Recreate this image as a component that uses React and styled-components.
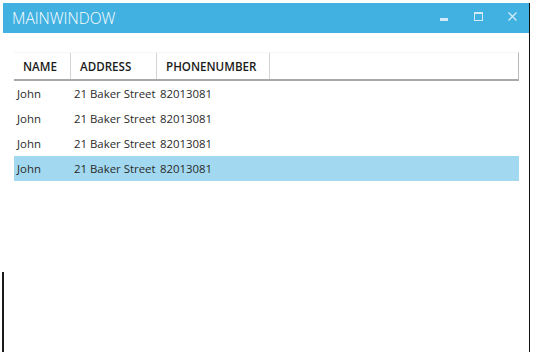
import React from 'react'
import styled, { createGlobalStyle } from 'styled-components'

const people = [
  { name: 'John', address: '21 Baker Street', phone: '82013081' },
  { name: 'John', address: '21 Baker Street', phone: '82013081' },
  { name: 'John', address: '21 Baker Street', phone: '82013081' },
  { name: 'John', address: '21 Baker Street', phone: '82013081' },
]

const columns = ['NAME', 'ADDRESS', 'PHONENUMBER']

const App = () => {
  return (
    <>
      <GlobalStyle />
      <Window>
        <TitleBar>
          <Title>MAINWINDOW</Title>
          <Controls>
            <ControlButton aria-label="minimize">
              <svg width="9" height="9" viewBox="0 0 9 9">
                <rect x="0" y="6" width="8" height="3" fill="currentColor" />
              </svg>
            </ControlButton>
            <ControlButton aria-label="maximize">
              <svg width="9" height="9" viewBox="0 0 9 9">
                <rect x="0.5" y="0.5" width="8" height="8" fill="none" stroke="currentColor" />
                <rect x="0" y="0" width="9" height="2" fill="currentColor" />
              </svg>
            </ControlButton>
            <ControlButton aria-label="close">
              <svg width="9" height="9" viewBox="0 0 9 9">
                <path d="M0.5 0.5 L8.5 8.5 M8.5 0.5 L0.5 8.5" stroke="currentColor" strokeWidth="1.3" />
              </svg>
            </ControlButton>
          </Controls>
        </TitleBar>

        <Body>
          <Grid>
            <HeaderRow>
              {columns.map((c) => (
                <HeaderCell key={c}>{c}</HeaderCell>
              ))}
              <HeaderFill />
            </HeaderRow>
            {people.map((p, i) => (
              <Row key={i} selected={i === 3}>
                <Cell>{p.name}</Cell>
                <Cell>{p.address}</Cell>
                <Cell>{p.phone}</Cell>
              </Row>
            ))}
          </Grid>
        </Body>
      </Window>
    </>
  )
}

const GlobalStyle = createGlobalStyle`
  html, body {
    margin: 0;
    padding: 0;
    background: #ffffff;
  }
  body {
    font-family: "Open Sans", "Noto Sans", sans-serif;
  }
`

const Window = styled.div`
  position: relative;
  width: 526px;
  height: 349px;
  margin: 3px 0 0 3px;
  border-right: 1px solid #111;
  display: flex;
  flex-direction: column;

  &::before {
    content: '';
    position: absolute;
    left: -1px;
    bottom: 0;
    width: 2px;
    height: 80px;
    background: #1a1a1a;
  }
`

const TitleBar = styled.div`
  height: 30px;
  background: #41b1e1;
  display: flex;
  align-items: center;
  justify-content: space-between;
  padding-left: 9px;
`

const Title = styled.span`
  color: #ffffff;
  font-family: "Open Sans", sans-serif;
  font-weight: 300;
  font-size: 15.5px;
  margin-top: -1px;
`

const Controls = styled.div`
  display: flex;
  align-items: center;
`

const ControlButton = styled.div`
  width: 34px;
  height: 30px;
  display: flex;
  align-items: center;
  justify-content: center;
  color: #d2ebf7;
  padding-bottom: 3px;
  box-sizing: border-box;
`

const Body = styled.div`
  flex: 1;
  padding: 19px 10px 0 11px;
`

const Grid = styled.div`
  display: flex;
  flex-direction: column;
  width: 505px;
`

const HeaderRow = styled.div`
  display: grid;
  grid-template-columns: 57px 86px 113px 1fr;
  height: 26px;
  border-top: 1px solid #f6f6f6;
  border-bottom: 2px solid #a9a9a9;
  border-right: 1px solid #b8b8b8;
`

const HeaderCell = styled.div`
  display: flex;
  align-items: center;
  padding-left: 9px;
  border-right: 1px solid #d4d4d4;
  font-size: 11.6px;
  font-weight: 600;
  color: #1b1b1b;
`

const HeaderFill = styled.div``

const Row = styled.div`
  display: grid;
  grid-template-columns: 57px 86px 113px 1fr;
  height: 25px;
  align-items: center;
  background: ${(p) => (p.selected ? '#a2d9f0' : 'transparent')};
`

const Cell = styled.div`
  padding-left: 3px;
  font-size: 11.4px;
  color: #2a2a2a;
  white-space: nowrap;
`

export default App
